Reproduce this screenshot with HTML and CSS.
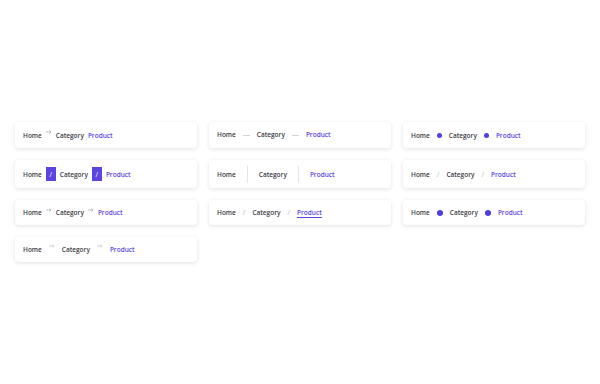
FILE: index.html
```html
<!DOCTYPE html>
<html lang="en">
<head>
    <meta charset="UTF-8">
    <meta name="viewport" content="width=device-width, initial-scale=1.0">
    <title>Breadcrumb Styles</title>
    <link rel="stylesheet" href="styles.css">
</head>
<body>
    <div class="page">
        <div class="grid">
            <!-- row 1 -->
            <nav class="crumbs arrows">
                <a class="crumb">Home</a>
                <svg class="sep arrow" viewBox="0 0 6 4"><path d="M0 2h5M3.6 0.6L5 2 3.6 3.4"/></svg>
                <a class="crumb">Category</a>
                <a class="crumb current">Product</a>
            </nav>
            <nav class="crumbs dashes">
                <a class="crumb">Home</a><span class="sep dash"></span>
                <a class="crumb">Category</a><span class="sep dash"></span>
                <a class="crumb current">Product</a>
            </nav>
            <nav class="crumbs dots">
                <a class="crumb">Home</a><span class="sep dot"></span>
                <a class="crumb">Category</a><span class="sep dot"></span>
                <a class="crumb current">Product</a>
            </nav>

            <!-- row 2 -->
            <nav class="crumbs boxed">
                <a class="crumb">Home</a><span class="sep box">/</span>
                <a class="crumb">Category</a><span class="sep box">/</span>
                <a class="crumb current">Product</a>
            </nav>
            <nav class="crumbs divided">
                <a class="crumb">Home</a><span class="sep line"></span>
                <a class="crumb">Category</a><span class="sep line"></span>
                <a class="crumb current">Product</a>
            </nav>
            <nav class="crumbs slashes">
                <a class="crumb">Home</a><span class="sep slash">/</span>
                <a class="crumb">Category</a><span class="sep slash">/</span>
                <a class="crumb current">Product</a>
            </nav>

            <!-- row 3 -->
            <nav class="crumbs arrows">
                <a class="crumb">Home</a>
                <svg class="sep arrow" viewBox="0 0 6 4"><path d="M0 2h5M3.6 0.6L5 2 3.6 3.4"/></svg>
                <a class="crumb">Category</a>
                <svg class="sep arrow" viewBox="0 0 6 4"><path d="M0 2h5M3.6 0.6L5 2 3.6 3.4"/></svg>
                <a class="crumb current">Product</a>
            </nav>
            <nav class="crumbs slashes">
                <a class="crumb">Home</a><span class="sep slash">/</span>
                <a class="crumb">Category</a><span class="sep slash">/</span>
                <a class="crumb current underline">Product</a>
            </nav>
            <nav class="crumbs dots big">
                <a class="crumb">Home</a><span class="sep dot"></span>
                <a class="crumb">Category</a><span class="sep dot"></span>
                <a class="crumb current">Product</a>
            </nav>

            <!-- row 4 -->
            <nav class="crumbs arrows wide">
                <a class="crumb">Home</a>
                <svg class="sep arrow faint" viewBox="0 0 6 4"><path d="M0 2h5M3.6 0.6L5 2 3.6 3.4"/></svg>
                <a class="crumb">Category</a>
                <svg class="sep arrow faint" viewBox="0 0 6 4"><path d="M0 2h5M3.6 0.6L5 2 3.6 3.4"/></svg>
                <a class="crumb current">Product</a>
            </nav>
        </div>
    </div>
</body>
</html>
```

FILE: styles.css
```css
body {
    margin: 0;
    background-color: #ffffff;
    font-family: "Open Sans", "Noto Sans", sans-serif;
    color: #3f3f46;
}
.page {
    height: 384px;
    display: flex;
    align-items: center;
    padding: 0 15px;
    box-sizing: border-box;
}
.grid {
    width: 100%;
    display: grid;
    grid-template-columns: repeat(3, 1fr);
    gap: 12px;
}
.crumbs {
    display: flex;
    align-items: center;
    gap: 4px;
    padding: 7px 8px;
    background-color: #fff;
    border-radius: 4px;
    box-shadow: 0 1px 4px rgba(0, 0, 0, 0.12);
    font-size: 6.5px;
    line-height: 11px;
    font-weight: 600;
}
.crumb {
    color: #3a3a42;
    text-decoration: none;
}
.crumb.current {
    color: #5b45e0;
}
.crumb.underline {
    text-decoration: underline;
    text-underline-offset: 2px;
    text-decoration-thickness: 1px;
}

/* separators */
.sep {
    color: #b4b4bb;
    font-weight: 400;
}
.arrow {
    width: 6px;
    height: 4px;
    align-self: flex-start;
    margin: 1px 0 0 0;
    fill: none;
    stroke: #a4a4ac;
    stroke-width: 0.7;
}
.arrow.faint {
    stroke: #c0c0c8;
}
.wide {
    gap: 7px;
}
.wide .arrow {
    margin-top: 0;
}
.dashes {
    gap: 3px;
    line-height: 12px;
}
.dash {
    width: 7px;
    height: 1px;
    background-color: #d4d4d8;
    margin: 0 4px;
}
.dot {
    width: 5px;
    height: 5px;
    border-radius: 50%;
    background-color: #4f3fe0;
    margin: 0 3px;
}
.big .dot {
    width: 6px;
    height: 6px;
}
.box {
    width: 10px;
    height: 14px;
    display: flex;
    align-items: center;
    justify-content: center;
    background-color: #5b45e0;
    color: #fff;
    font-size: 7px;
}
.line {
    width: 1px;
    height: 17px;
    background-color: #e4e4e7;
    margin: -3px 7px;
}
.slash {
    font-size: 7px;
    margin: 0 3px;
}
```
